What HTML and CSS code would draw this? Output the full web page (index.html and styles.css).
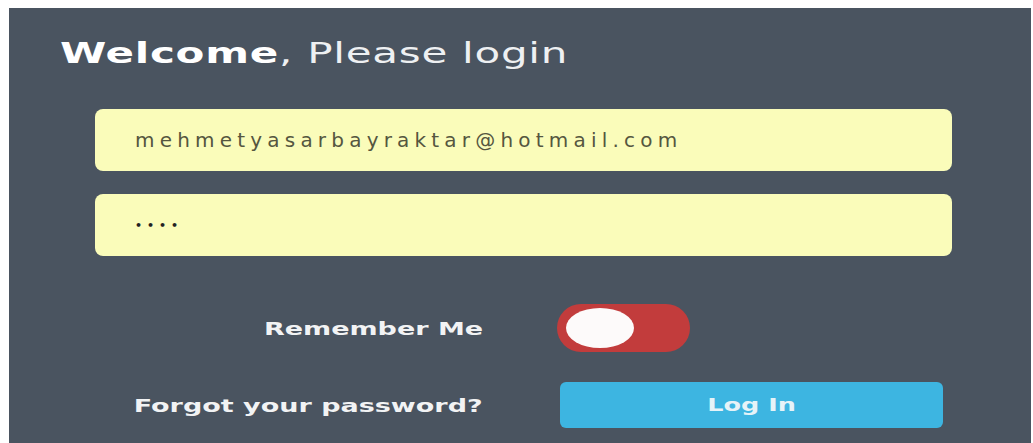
FILE: index.html
```html
<!DOCTYPE html>
<html lang="en">
<head>
<meta charset="utf-8">
<title>Login</title>
<link rel="stylesheet" href="styles.css">
</head>
<body>
  <main class="panel">
    <h1 class="title"><span class="wide"><strong>Welcome</strong>, Please login</span></h1>
    <form class="login-form">
      <input class="field" type="email" value="mehmetyasarbayraktar@hotmail.com">
      <input class="field field-pass" type="password" value="1234">
      <div class="options">
        <span class="opt-label"><span class="wide-r">Remember Me</span></span>
        <label class="toggle"><span class="knob"></span></label>
        <a class="opt-label" href="#"><span class="wide-r">Forgot your password?</span></a>
        <button class="btn-login" type="button"><span class="wide-c">Log In</span></button>
      </div>
    </form>
  </main>
</body>
</html>
```

FILE: styles.css
```css
html, body {
  margin: 0;
  height: 100%;
}

body {
  background: #ffffff;
  padding: 8px 2px 0 9px;
  box-sizing: border-box;
  overflow: hidden;
  font-family: "DejaVu Sans", "Open Sans", sans-serif;
}

/* wide display face: glyphs stretched horizontally */
.wide,
.wide-r,
.wide-c {
  display: inline-block;
  transform: scaleX(1.5);
}

.wide { transform-origin: left center; }
.wide-r { transform-origin: right center; }
.wide-c { transform-origin: center center; }

.panel {
  background: #4a5460;
  height: 100%;
  padding: 29px 79px 0 51px;
  box-sizing: border-box;
}

.title {
  margin: 0;
  font-size: 28px;
  line-height: 34px;
  font-weight: 400;
  color: #eef0f2;
  letter-spacing: 0.5px;
  white-space: nowrap;
}

.title strong {
  font-weight: 700;
  color: #ffffff;
}

.login-form {
  margin: 38px 0 0 35px;
  display: flex;
  flex-direction: column;
  gap: 23px;
}

.field {
  display: block;
  width: 100%;
  height: 62px;
  box-sizing: border-box;
  border: none;
  border-radius: 8px;
  background: #fafcba;
  padding: 0 0 0 40px;
  font-family: "DejaVu Sans", sans-serif;
  font-size: 20px;
  letter-spacing: 5.2px;
  color: #55563f;
  outline: none;
}

.field-pass {
  font-size: 11px;
  letter-spacing: 5px;
  font-weight: 700;
  color: #222222;
}

.options {
  display: grid;
  grid-template-columns: 388px 386px;
  column-gap: 74px;
  row-gap: 30px;
  align-items: center;
  margin-top: 25px;
}

.opt-label {
  justify-self: end;
  font-size: 18px;
  font-weight: 700;
  color: #f2f3f4;
  text-decoration: none;
  white-space: nowrap;
}

.toggle {
  width: 133px;
  height: 48px;
  box-sizing: border-box;
  border-radius: 24px;
  background: #c23c3c;
  padding: 4px 9px;
  display: flex;
  align-items: center;
}

.knob {
  width: 68px;
  height: 40px;
  border-radius: 50%;
  background: #fdfafa;
}

.btn-login {
  margin-left: 3px;
  width: 383px;
  height: 46px;
  border: none;
  border-radius: 6px;
  background: #3db5e1;
  color: #e6f3f8;
  font-family: "DejaVu Sans", sans-serif;
  font-size: 17px;
  font-weight: 700;
}
```
